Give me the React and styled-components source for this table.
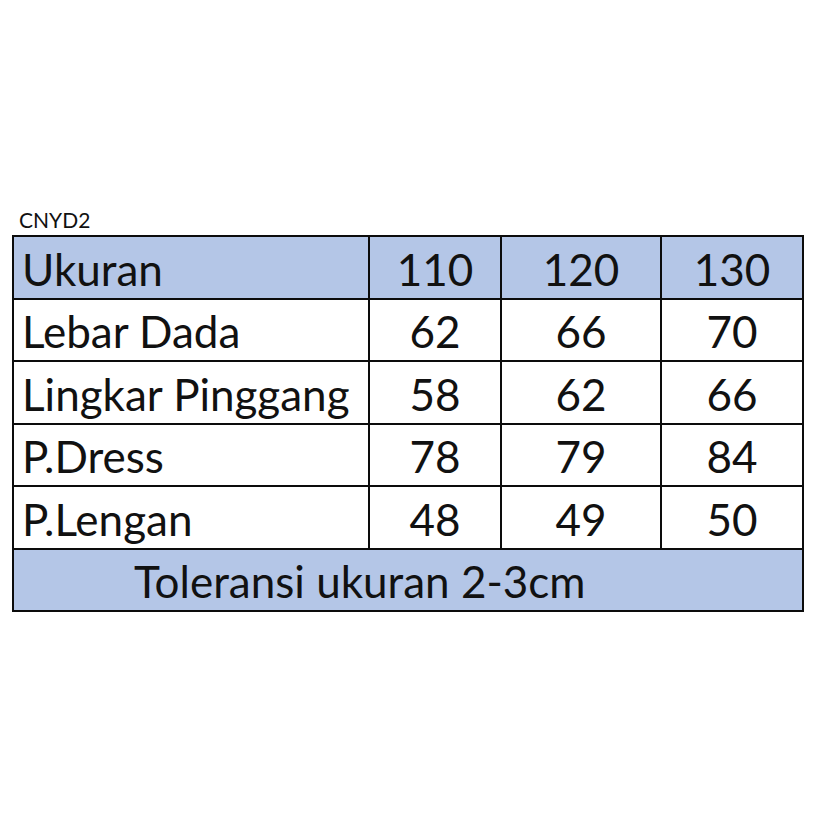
import styled, { createGlobalStyle } from "styled-components";

const GlobalStyle = createGlobalStyle`
  html, body {
    margin: 0;
    padding: 0;
    background: #ffffff;
  }
  body {
    font-family: Lato, "Open Sans", sans-serif;
    color: #111;
  }
`;

const Page = styled.div`
  width: 826px;
  height: 826px;
  padding: 208px 0 0 12px;
  box-sizing: border-box;
`;

const Code = styled.div`
  font-size: 21px;
  line-height: 24px;
  padding-left: 7px;
  height: 27px;
  color: #111;
`;

const Grid = styled.div`
  display: grid;
  grid-template-columns: 354px 130px 158px 140px;
  grid-auto-rows: 60.5px;
  gap: 2px;
  padding: 2px;
  width: fit-content;
  background: #0c0c0c;
`;

const Cell = styled.div`
  display: flex;
  align-items: center;
  justify-content: ${(p) => (p.$center ? "center" : "flex-start")};
  padding: 3px 0 0 ${(p) => (p.$center ? 0 : 8)}px;
  box-sizing: border-box;
  background: ${(p) => (p.$head ? "#b4c6e7" : "#ffffff")};
  font-size: 44px;
  color: #111;
  white-space: nowrap;
`;

const Footer = styled(Cell)`
  grid-column: 1 / -1;
  padding-left: 120px;
`;

const header = ["110", "120", "130"];

const rows = [
  ["Lebar Dada", "62", "66", "70"],
  ["Lingkar Pinggang", "58", "62", "66"],
  ["P.Dress", "78", "79", "84"],
  ["P.Lengan", "48", "49", "50"],
];

function App() {
  return (
    <Page>
      <GlobalStyle />
      <Code>CNYD2</Code>
      <Grid>
        <Cell $head>Ukuran</Cell>
        {header.map((h) => (
          <Cell $head $center key={h}>
            {h}
          </Cell>
        ))}
        {rows.map((row) =>
          row.map((value, idx) => (
            <Cell $center={idx > 0} key={row[0] + idx}>
              {value}
            </Cell>
          ))
        )}
        <Footer $head>Toleransi ukuran 2-3cm</Footer>
      </Grid>
    </Page>
  );
}

export default App;
